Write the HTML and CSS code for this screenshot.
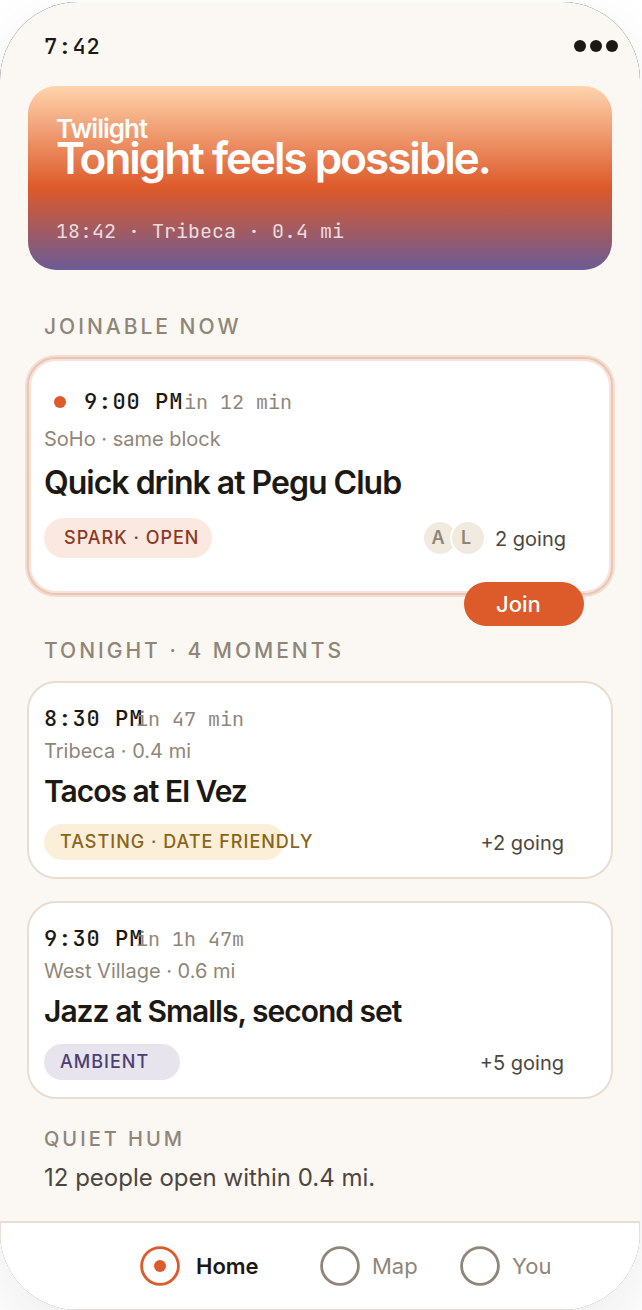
FILE: index.html
```
<!DOCTYPE html>
<html lang="en">
<head>
    <meta charset="UTF-8">
    <meta name="viewport" content="width=device-width, initial-scale=1.0">
    <title>Twilight</title>
    <link rel="stylesheet" href="styles.css">
</head>
<body>
    <div class="phone">
        <div class="screen">
            <header class="status-bar">
                <span class="clock">7:42</span>
                <span class="dots"><i></i><i></i><i></i></span>
            </header>

            <main class="content">
                <section class="hero">
                    <p class="hero-label">Twilight</p>
                    <h1>Tonight feels possible.</h1>
                    <p class="hero-meta">18:42 · Tribeca · 0.4 mi</p>
                </section>

                <h2 class="section-label">JOINABLE NOW</h2>
                <article class="card card-live">
                    <div class="when">
                        <span class="live-dot"></span>
                        <span class="time">9:00 PM</span>
                        <span class="countdown">in 12 min</span>
                    </div>
                    <p class="place">SoHo · same block</p>
                    <h3>Quick drink at Pegu Club</h3>
                    <div class="card-footer">
                        <span class="tag tag-spark">SPARK · OPEN</span>
                        <div class="people">
                            <span class="avatar">A</span>
                            <span class="avatar">L</span>
                            <span class="going">2 going</span>
                        </div>
                    </div>
                    <button class="join" type="button">Join</button>
                </article>

                <h2 class="section-label">TONIGHT · 4 MOMENTS</h2>
                <div class="card-list">
                    <article class="card">
                        <div class="when">
                            <span class="time">8:30 PM</span>
                            <span class="countdown">in 47 min</span>
                        </div>
                        <p class="place">Tribeca · 0.4 mi</p>
                        <h3>Tacos at El Vez</h3>
                        <div class="card-footer">
                            <span class="tag tag-tasting">TASTING · DATE FRIENDLY</span>
                            <span class="going">+2 going</span>
                        </div>
                    </article>
                    <article class="card">
                        <div class="when">
                            <span class="time">9:30 PM</span>
                            <span class="countdown">in 1h 47m</span>
                        </div>
                        <p class="place">West Village · 0.6 mi</p>
                        <h3>Jazz at Smalls, second set</h3>
                        <div class="card-footer">
                            <span class="tag tag-ambient">AMBIENT</span>
                            <span class="going">+5 going</span>
                        </div>
                    </article>
                </div>

                <h2 class="section-label section-quiet">QUIET HUM</h2>
                <p class="quiet-text">12 people open within 0.4 mi.</p>
            </main>

            <nav class="tab-bar">
                <a class="tab active" href="#home">
                    <svg width="40" height="40" viewBox="0 0 40 40" aria-hidden="true">
                        <circle cx="20" cy="20" r="18.4" fill="none" stroke="currentColor" stroke-width="2.8"/>
                        <circle cx="20" cy="20" r="6" fill="currentColor"/>
                    </svg>
                    <span>Home</span>
                </a>
                <a class="tab" href="#map">
                    <svg width="40" height="40" viewBox="0 0 40 40" aria-hidden="true">
                        <circle cx="20" cy="20" r="18.4" fill="none" stroke="currentColor" stroke-width="2.8"/>
                    </svg>
                    <span>Map</span>
                </a>
                <a class="tab" href="#you">
                    <svg width="40" height="40" viewBox="0 0 40 40" aria-hidden="true">
                        <circle cx="20" cy="20" r="18.4" fill="none" stroke="currentColor" stroke-width="2.8"/>
                    </svg>
                    <span>You</span>
                </a>
            </nav>
        </div>
    </div>
</body>
</html>
```
FILE: styles.css
```
:root {
    --ink: #1c1814;
    --ink-soft: #4d4640;
    --muted: #8f8678;
    --paper: #fbf7f2;
    --line: #e8ddd0;
    --accent: #dd5a2b;
    --sans: "Inter", sans-serif;
    --mono: "JetBrains Mono", "Liberation Mono", monospace;
}

* {
    box-sizing: border-box;
    margin: 0;
    padding: 0;
}

body {
    background: #fff;
    color: var(--ink);
    font-family: var(--sans);
    font-size: 20px;
    line-height: 24px;
    padding: 2px 2px 0 0;
    overflow: hidden;
}

.phone {
    background: var(--ink);
    border-radius: 78px;
    box-shadow: 0 24px 60px rgba(28, 24, 20, 0.08);
}

.screen {
    background: var(--paper);
    border-radius: 78px;
    overflow: hidden;
}

.status-bar {
    display: flex;
    justify-content: space-between;
    align-items: center;
    padding: 31px 22px 27px 44px;
}

.clock,
.time {
    font-family: var(--mono);
    font-size: 22px;
    font-weight: 500;
    letter-spacing: 1px;
}

.clock {
    padding-top: 2px;
}

.dots {
    display: flex;
    gap: 4px;
}

.dots i {
    width: 12px;
    height: 12px;
    border-radius: 50%;
    background: var(--ink);
}

.content {
    padding: 0 27px 28px;
}

/* hero */
.hero {
    margin: 0 1px 45px;
    padding: 33px 28px 27px;
    border-radius: 28px;
    background: linear-gradient(#ffd4ad 0%, var(--accent) 55%, #6b5b95 100%);
    color: #fff;
}

.hero-label {
    font-size: 26px;
    font-weight: 600;
    line-height: 20px;
    letter-spacing: -1px;
}

.hero h1 {
    font-size: 44px;
    font-weight: 600;
    line-height: 38px;
    letter-spacing: -2px;
}

.hero-meta {
    margin-top: 42px;
    font-family: var(--mono);
    color: rgba(255, 255, 255, 0.8);
}

.section-label {
    margin: 44px 0 18px 17px;
    font-size: 21px;
    font-weight: 500;
    letter-spacing: 3px;
    color: var(--muted);
}

/* cards */
.card-list {
    display: grid;
    gap: 22px;
}

.card {
    position: relative;
    padding: 24px 47px 17px 15px;
    border: 2px solid var(--line);
    border-radius: 29px;
    background: #fff;
}

.card-live {
    padding: 31px 45px 35px 15px;
    border-color: #e8c6b4;
    box-shadow: 0 0 0 2px #f6ddd1, inset 0 0 0 2px #fae0d8;
}

.when {
    display: flex;
    align-items: center;
    white-space: nowrap;
}

.live-dot {
    width: 12px;
    height: 12px;
    margin: 0 18px 0 10px;
    border-radius: 50%;
    background: var(--accent);
}

.time {
    width: 92px;
}

.card-live .time {
    width: 100px;
}

.countdown {
    font-family: var(--mono);
    color: var(--muted);
}

.place {
    margin: 8px 0;
    color: var(--muted);
}

.card h3 {
    font-size: 30px;
    font-weight: 600;
    line-height: 40px;
    letter-spacing: -1px;
}

.card-live .place {
    margin: 13px 0 12px;
}

.card-live h3 {
    font-size: 32px;
}

.card-footer {
    display: flex;
    justify-content: space-between;
    align-items: center;
    margin-top: 13px;
}

.card-live .card-footer {
    margin-top: 15px;
}

.tag {
    height: 36px;
    padding: 0 16px;
    border-radius: 20px;
    font-size: 18px;
    font-weight: 500;
    line-height: 36px;
    letter-spacing: 1px;
    white-space: nowrap;
}

.tag-spark {
    width: 168px;
    height: 40px;
    padding: 0 20px;
    line-height: 40px;
    background: #fbe8e1;
    color: #8c3a1f;
}

.tag-tasting {
    width: 240px;
    background: #fbefd9;
    color: #8a6418;
}

.tag-ambient {
    width: 136px;
    background: #e7e4ee;
    color: #4b3f72;
}

.people {
    display: flex;
    align-items: center;
}

.avatar {
    width: 36px;
    height: 36px;
    margin-right: -8px;
    padding-right: 4px;
    border: 2px solid #fff;
    border-radius: 50%;
    background: #f1ebdf;
    color: var(--muted);
    font-size: 18px;
    font-weight: 600;
    line-height: 32px;
    text-align: center;
}

.going {
    padding-top: 2px;
    color: var(--ink-soft);
}

.people .going {
    margin-left: 17px;
}

.join {
    position: absolute;
    right: 27px;
    bottom: -33px;
    width: 120px;
    height: 44px;
    padding: 0 32px;
    border: none;
    border-radius: 22px;
    background: var(--accent);
    color: #fff;
    font-family: var(--sans);
    font-size: 22px;
    font-weight: 500;
    text-align: left;
    cursor: pointer;
}

.section-quiet {
    margin: 28px 0 12px 17px;
    font-size: 20px;
}

.quiet-text {
    margin-left: 17px;
    font-size: 24px;
    line-height: 30px;
    color: var(--ink-soft);
}

/* bottom navigation */
.tab-bar {
    display: grid;
    grid-template-columns: 180px 140px auto;
    padding: 23px 0 23px 139px;
    border: 2px solid var(--line);
    border-width: 2px 1px 1px;
    background: #fff;
}

.tab {
    display: flex;
    align-items: center;
    gap: 12px;
    color: var(--muted);
    font-size: 22px;
    text-decoration: none;
}

.tab.active {
    gap: 16px;
    color: var(--accent);
    font-weight: 600;
}

.tab.active span {
    color: var(--ink);
}
```
